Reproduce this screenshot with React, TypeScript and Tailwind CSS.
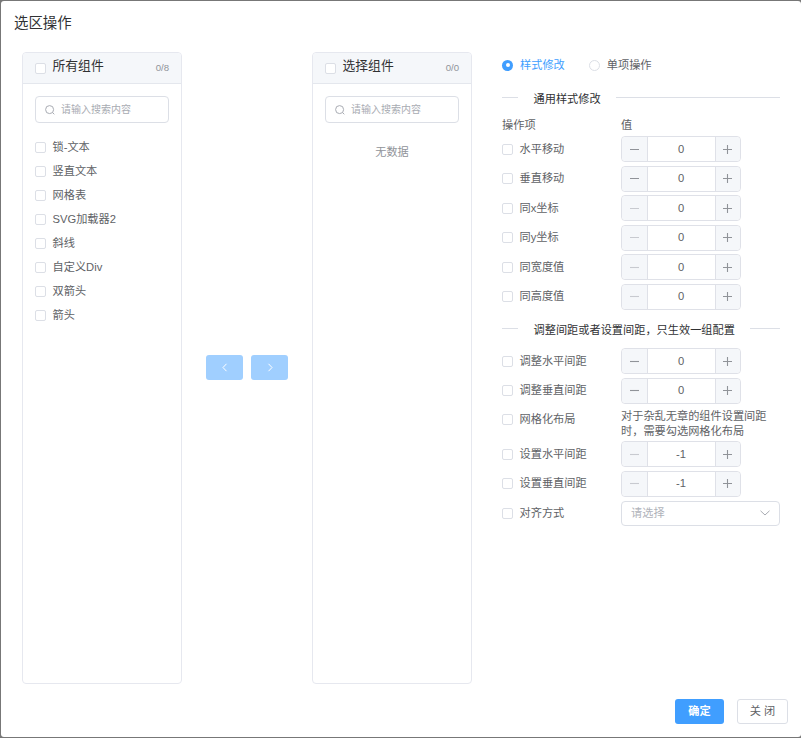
import React from "react";

const FONT = "font-['Liberation_Sans','Noto_Sans_CJK_SC',sans-serif]";

function Box() {
  return <span className="block w-[11px] h-[11px] box-border border border-[#dcdfe6] rounded-[2px] bg-white shrink-0" />;
}

function Search() {
  return (
    <div className="mx-3 mt-3 h-[27px] border border-[#dcdfe6] rounded-[4px] flex items-center pl-[9px]">
      <svg width="10" height="10" viewBox="0 0 10 10" fill="none" stroke="#a8abb2" strokeWidth="1" className="shrink-0">
        <circle cx="4.6" cy="4.6" r="4" />
        <path d="M7.5 7.5l1.8 1.8" />
      </svg>
      <span className="ml-[6px] text-[10px] leading-none text-[#a8abb2]">请输入搜索内容</span>
    </div>
  );
}

function Panel({ title, count, children }: { title: string; count: string; children: React.ReactNode }) {
  return (
    <div className="w-[160px] h-[632px] border border-[#e6e8ef] rounded-[4px] flex flex-col">
      <div className="h-[31px] bg-[#f5f7fa] border-b border-[#e4e7ed] flex items-center pl-3 pr-[12px] rounded-t-[4px] shrink-0">
        <Box />
        <span className="ml-[6.5px] -mt-[5px] text-[12.8px] text-[#303133]">{title}</span>
        <span className="ml-auto text-[9.6px] text-[#909399]">{count}</span>
      </div>
      <Search />
      {children}
    </div>
  );
}

function Stepper({ value, disabledMinus }: { value: string; disabledMinus?: boolean }) {
  return (
    <div className="w-[120px] h-[26px] border border-[#dfe1e8] rounded-[4px] flex items-stretch">
      <span className="w-[25.5px] bg-[#f5f7fa] border-r border-[#dfe1e8] rounded-l-[4px] flex items-center justify-center">
        <svg width="9" height="9" viewBox="0 0 9 9" stroke={disabledMinus ? "#c8cad0" : "#909399"} strokeWidth="1.1"><path d="M0 4.5h9" /></svg>
      </span>
      <span className="flex-1 flex items-center justify-center text-[11.2px] text-[#606266]">{value}</span>
      <span className="w-[25.5px] bg-[#f5f7fa] border-l border-[#dfe1e8] rounded-r-[4px] flex items-center justify-center">
        <svg width="9" height="9" viewBox="0 0 9 9" stroke="#909399" strokeWidth="1.1"><path d="M0 4.5h9M4.5 0v9" /></svg>
      </span>
    </div>
  );
}

function Row({ label, children, h = "h-[29.5px]", labelClass = "" }: { label: string; children?: React.ReactNode; h?: string; labelClass?: string }) {
  return (
    <div className={"flex items-center " + h}>
      <div className={"w-[119px] flex items-center " + labelClass}>
        <Box />
        <span className="ml-[6.5px] text-[11.2px] text-[#606266]">{label}</span>
      </div>
      {children}
    </div>
  );
}

function Divider({ text }: { text: string }) {
  return (
    <div className="flex items-center h-[14px]">
      <span className="h-px w-4 bg-[#dcdfe6] shrink-0" />
      <span className="px-[15.5px] pt-[4px] text-[11.2px] text-[#303133] whitespace-nowrap">{text}</span>
      <span className="h-px bg-[#dcdfe6] flex-1" />
    </div>
  );
}

const items = ["锁-文本", "竖直文本", "网格表", "SVG加载器2", "斜线", "自定义Div", "双箭头", "箭头"];

export default function App() {
  return (
    <div className="w-[801px] h-[738px] bg-[#777777] pt-px pl-px pb-px">
      <div className={"w-[800px] h-[736px] bg-white rounded-[3px] overflow-hidden flex flex-col relative " + FONT}>
        <div className="h-[51px] pl-[13px] pt-[12px] text-[14.4px] leading-[20px] text-[#303133] shrink-0">选区操作</div>
        <div className="flex items-start pl-[21px]">
          <Panel title="所有组件" count="0/8">
            <div className="mt-[12px] pl-3 flex flex-col">
              {items.map((t) => (
                <div key={t} className="h-6 flex items-center">
                  <Box />
                  <span className="ml-[6.5px] text-[11.2px] text-[#606266]">{t}</span>
                </div>
              ))}
            </div>
          </Panel>
          <div className="w-[130px] h-[632px] flex items-center justify-center gap-2 pb-[2px]">
            <span className="w-[37px] h-[25px] rounded-[3px] bg-[#a0cfff] flex items-center justify-center">
              <svg width="6" height="9" viewBox="0 0 6 9" fill="none" stroke="#fff" strokeWidth="1"><path d="M4.5 0.8L1 4.5l3.5 3.7" /></svg>
            </span>
            <span className="w-[37px] h-[25px] rounded-[3px] bg-[#a0cfff] flex items-center justify-center">
              <svg width="6" height="9" viewBox="0 0 6 9" fill="none" stroke="#fff" strokeWidth="1"><path d="M1.5 0.8L5 4.5 1.5 8.2" /></svg>
            </span>
          </div>
          <Panel title="选择组件" count="0/0">
            <div className="mt-[21px] text-center text-[11.2px] text-[#909399]">无数据</div>
          </Panel>
          <div className="ml-[30px] w-[278px] flex flex-col">
            <div className="flex items-center h-[24px] mt-px">
              <span className="w-[11px] h-[11px] rounded-full bg-[#409eff] flex items-center justify-center">
                <span className="w-[4px] h-[4px] rounded-full bg-white" />
              </span>
              <span className="ml-[7px] text-[11.2px] text-[#409eff]">样式修改</span>
              <span className="ml-[24px] w-[11px] h-[11px] box-border rounded-full border border-[#dcdfe6]" />
              <span className="ml-[7px] text-[11.2px] text-[#606266]">单项操作</span>
            </div>
            <div className="mt-[13px]"><Divider text="通用样式修改" /></div>
            <div className="flex items-center h-[16px] mt-[13px] text-[11.2px] text-[#606266]">
              <span className="w-[119px]">操作项</span>
              <span>值</span>
            </div>
            <div className="flex flex-col mt-[1.5px]">
              <Row label="水平移动"><Stepper value="0" /></Row>
              <Row label="垂直移动"><Stepper value="0" /></Row>
              <Row label="同x坐标"><Stepper value="0" disabledMinus /></Row>
              <Row label="同y坐标"><Stepper value="0" disabledMinus /></Row>
              <Row label="同宽度值"><Stepper value="0" disabledMinus /></Row>
              <Row label="同高度值"><Stepper value="0" disabledMinus /></Row>
            </div>
            <div className="mt-[10px]"><Divider text="调整间距或者设置间距，只生效一组配置" /></div>
            <div className="mt-[11px] flex flex-col">
              <Row label="调整水平间距"><Stepper value="0" /></Row>
              <Row label="调整垂直间距"><Stepper value="0" /></Row>
              <Row label="网格化布局" h="h-[34px]" labelClass="-mt-[6px]">
                <span className="w-[152px] pt-[2px] text-[11.2px] leading-[15px] text-[#606266]">对于杂乱无章的组件设置间距时，需要勾选网格化布局</span>
              </Row>
              <Row label="设置水平间距"><Stepper value="-1" disabledMinus /></Row>
              <Row label="设置垂直间距"><Stepper value="-1" disabledMinus /></Row>
              <Row label="对齐方式">
                <div className="w-[159px] h-[25px] border border-[#dcdfe6] rounded-[4px] flex items-center pl-[9px] pr-[9px]">
                  <span className="text-[11.2px] text-[#b0b3ba]">请选择</span>
                  <svg className="ml-auto" width="10" height="6" viewBox="0 0 10 6" fill="none" stroke="#a8abb2" strokeWidth="1"><path d="M0.5 0.8L5 5l4.5-4.2" /></svg>
                </div>
              </Row>
            </div>
          </div>
        </div>
        <div className="absolute right-[13px] bottom-[13px] flex gap-[13px]">
          <span className="w-[49px] h-[25px] rounded-[3px] bg-[#409eff] text-white text-[11.2px] font-bold flex items-center justify-center">确定</span>
          <span className="w-[51px] h-[25px] box-border rounded-[3px] border border-[#dcdfe6] text-[#606266] text-[11.2px] flex items-center justify-center">关 闭</span>
        </div>
      </div>
    </div>
  );
}
